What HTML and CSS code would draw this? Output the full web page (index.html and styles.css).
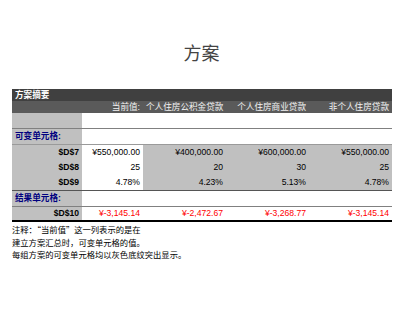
FILE: index.html
```html
<!DOCTYPE html>
<html lang="zh-CN">
<head>
  <meta charset="UTF-8">
  <title>方案</title>
  <link rel="stylesheet" href="styles.css">
</head>
<body>
  <div class="sheet">
    <h1 class="title">方案</h1>

    <table class="summary">
      <colgroup>
        <col class="c-label">
        <col class="c-current">
        <col class="c-plan">
        <col class="c-plan">
        <col class="c-plan">
      </colgroup>
      <tr class="head1">
        <td colspan="5">方案摘要</td>
      </tr>
      <tr class="head2">
        <td></td>
        <td>当前值:</td>
        <td>个人住房公积金贷款</td>
        <td>个人住房商业贷款</td>
        <td>非个人住房贷款</td>
      </tr>
      <tr class="blank">
        <td class="grey"></td><td></td><td></td><td></td><td></td>
      </tr>
      <tr class="section">
        <td class="grey">可变单元格:</td><td></td><td></td><td></td><td></td>
      </tr>
      <tr class="var first">
        <td class="grey name">$D$7</td>
        <td>¥550,000.00</td>
        <td class="grey">¥400,000.00</td>
        <td class="grey">¥600,000.00</td>
        <td class="grey">¥550,000.00</td>
      </tr>
      <tr class="var">
        <td class="grey name">$D$8</td>
        <td>25</td>
        <td class="grey">20</td>
        <td class="grey">30</td>
        <td class="grey">25</td>
      </tr>
      <tr class="var last">
        <td class="grey name">$D$9</td>
        <td>4.78%</td>
        <td class="grey">4.23%</td>
        <td class="grey">5.13%</td>
        <td class="grey">4.78%</td>
      </tr>
      <tr class="section">
        <td class="grey">结果单元格:</td><td></td><td></td><td></td><td></td>
      </tr>
      <tr class="result">
        <td class="grey name">$D$10</td>
        <td>¥-3,145.14</td>
        <td>¥-2,472.67</td>
        <td>¥-3,268.77</td>
        <td>¥-3,145.14</td>
      </tr>
    </table>

    <div class="notes">
      <p>注释：“当前值”这一列表示的是在</p>
      <p>建立方案汇总时，可变单元格的值。</p>
      <p>每组方案的可变单元格均以灰色底纹突出显示。</p>
    </div>
  </div>
</body>
</html>
```

FILE: styles.css
```css
body {
  margin: 0;
  background: #fff;
  font-family: "Liberation Sans", "Noto Sans CJK SC", sans-serif;
  color: #000;
}
.sheet {
  padding: 0 13px 0 12px;
}
.title {
  margin: 0;
  padding-top: 40px;
  height: 89px;
  box-sizing: border-box;
  text-align: center;
  font-family: "Noto Sans CJK SC", sans-serif;
  font-weight: normal;
  font-size: 18px;
  line-height: 24px;
  color: #444;
}
.summary {
  width: 379px;
  border-collapse: collapse;
  table-layout: fixed;
  font-size: 8.6px;
}
.c-label { width: 70px; }
.c-current { width: 61px; }
.c-plan { width: 83px; }
.summary td {
  padding: 0 3px 0 3px;
  height: 15px;
  line-height: 15px;
  text-align: right;
  white-space: nowrap;
  overflow: hidden;
}
.head1 td {
  height: 12px;
  line-height: 12px;
  background: #404040;
  color: #fff;
  font-weight: bold;
  text-align: left;
}
.head2 td {
  height: 12px;
  line-height: 12px;
  background: #5a5a5a;
  color: #f2f2f2;
}
.grey {
  background: #c0c0c0;
}
.section td {
  border-top: 1px solid #808080;
}
.section td:first-child {
  text-align: left;
  color: #000080;
  font-weight: bold;
}
.var.first td {
  border-top: 1px solid #9a9a9a;
}
.var.last td {
  border-bottom: 1px solid #555;
}
.name {
  font-weight: bold;
}
.result td {
  height: 13px;
  line-height: 13px;
  color: #f00;
  border-top: 1px solid #808080;
  border-bottom: 2px solid #000;
}
.result td.name {
  color: #000;
}
.notes {
  padding-top: 1px;
  font-family: "Noto Sans CJK SC", sans-serif;
  font-size: 8.3px;
  line-height: 12.5px;
}
.notes p {
  margin: 0;
}
```
